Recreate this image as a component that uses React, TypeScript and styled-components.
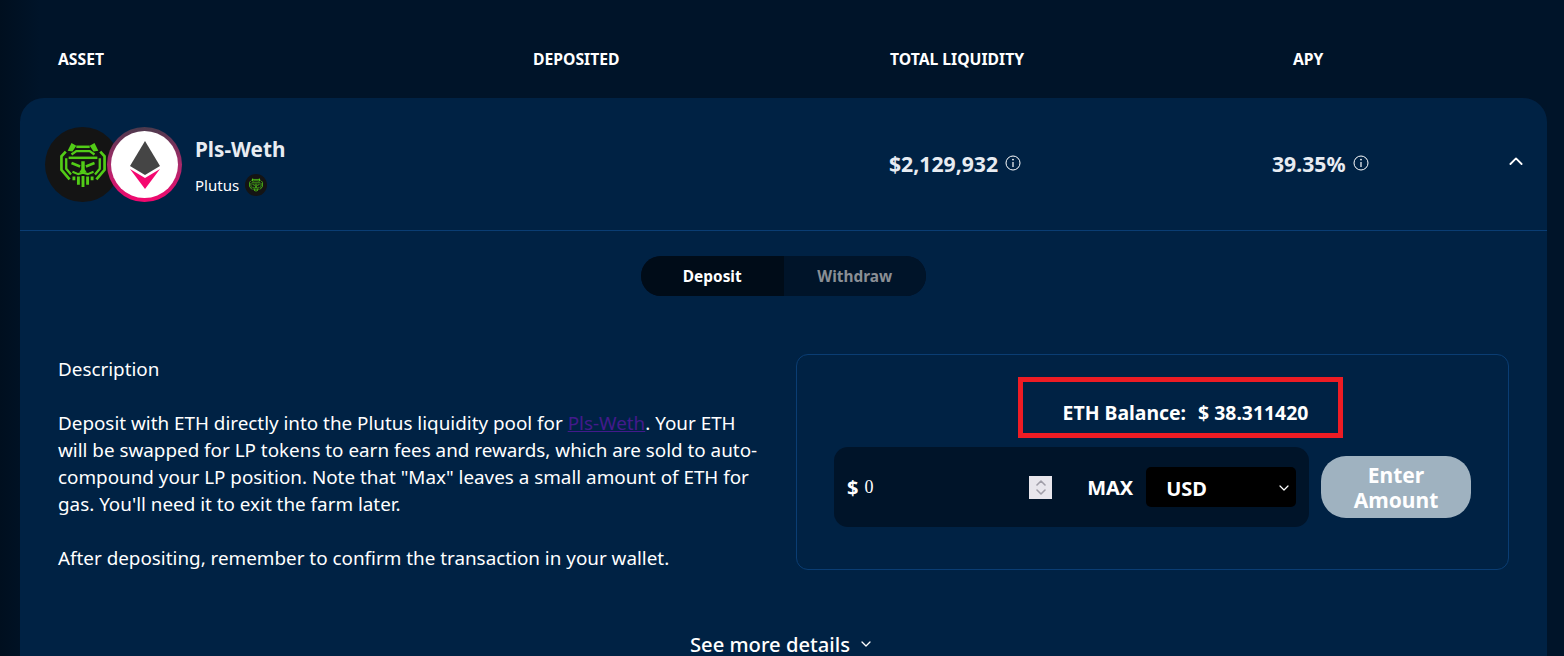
import React from "react";
import styled, { createGlobalStyle } from "styled-components";

const GlobalStyle = createGlobalStyle`
  html, body {
    margin: 0;
    padding: 0;
    height: 656px;
    overflow: hidden;
    background: #001429;
  }
  body {
    font-family: "Noto Sans", "Open Sans", sans-serif;
    color: #fff;
  }
`;

const Page = styled.div`
  width: 1564px;
  height: 656px;
  overflow: hidden;
  background: linear-gradient(to right, #000f1f 0, #001429 40px, #001429 100%);
`;

const TableHead = styled.div`
  display: grid;
  grid-template-columns: 475px 357px 403px 1fr;
  height: 98px;
  padding: 20px 0 0 58px;
  align-items: center;
  box-sizing: border-box;
`;

const HeadCell = styled.div`
  font-size: 15.7px;
  font-weight: 700;
  line-height: 20px;
`;

const Card = styled.section`
  margin: 0 17px 0 20px;
  background: #002244;
  border-radius: 24px 24px 0 0;
  height: 558px;
`;

const Row = styled.div`
  display: grid;
  grid-template-columns: 869px 383px 1fr auto;
  height: 132px;
  border-bottom: 1px solid #0a3d73;
  align-items: start;
`;

const AssetCell = styled.div`
  display: flex;
  align-items: center;
  padding: 29px 0 0 25px;
`;

const Avatars = styled.div`
  display: flex;
  width: 137px;
  flex: none;
`;

const Avatar = styled.div`
  width: 75px;
  height: 75px;
  border-radius: 50%;
  background: #141414;
  display: flex;
  align-items: center;
  justify-content: center;
  flex: none;
`;

const EthAvatar = styled.div`
  width: 75px;
  height: 75px;
  border-radius: 50%;
  margin-left: -13px;
  padding: 4px;
  box-sizing: border-box;
  background: linear-gradient(to bottom, #4a3a4c 0%, #a82a6a 50%, #f5076f 100%);
  flex: none;
`;

const EthInner = styled.div`
  width: 100%;
  height: 100%;
  border-radius: 50%;
  background: #fff;
  display: flex;
  align-items: center;
  justify-content: center;
`;

const AssetText = styled.div`
  display: flex;
  flex-direction: column;
  margin-left: 13px;
  padding-top: 2px;
`;

const AssetName = styled.div`
  font-size: 20.7px;
  font-weight: 700;
  line-height: 28px;
  color: #e8ecf2;
`;

const AssetSource = styled.div`
  display: flex;
  align-items: center;
  gap: 6px;
  font-size: 15px;
  line-height: 22px;
  margin-top: 11px;
`;

const MiniBadge = styled.div`
  width: 22px;
  height: 22px;
  border-radius: 50%;
  background: #141414;
  display: flex;
  align-items: center;
  justify-content: center;
`;

const StatCell = styled.div`
  display: flex;
  align-items: flex-start;
  gap: 7px;
  padding-top: 52px;
  font-size: 21.2px;
  font-weight: 700;
  line-height: 28px;
  color: #e8ecf2;
`;

const InfoWrap = styled.span`
  display: inline-flex;
  margin-top: 5px;
`;

const Collapse = styled.div`
  padding: 50px 24px 0 0;
`;

const TabsRow = styled.div`
  display: flex;
  justify-content: center;
  padding-top: 25px;
`;

const Tabs = styled.div`
  display: flex;
  width: 285px;
  height: 40px;
  border-radius: 20px;
  background: #001429;
  overflow: hidden;
`;

const Tab = styled.div<{ $active?: boolean }>`
  flex: 1;
  display: flex;
  align-items: center;
  justify-content: center;
  font-size: 15.4px;
  font-weight: 700;
  color: ${(p) => (p.$active ? "#fff" : "#8a8f95")};
  background: ${(p) => (p.$active ? "#000c18" : "#001429")};
`;

const Body = styled.div`
  display: grid;
  grid-template-columns: 706px 713px;
  column-gap: 32px;
  padding: 58px 0 0 38px;
`;

const Description = styled.div`
  font-size: 18.85px;
  line-height: 27px;
  color: #fff;
  padding-top: 2px;
`;

const Para = styled.p`
  margin: 0 0 27px;

  &:last-child {
    margin-bottom: 0;
  }
`;

const PoolLink = styled.a`
  color: #431a8c;
  text-decoration: underline;
`;

const Panel = styled.div`
  border: 1px solid #0a3d73;
  border-radius: 12px;
  height: 216px;
  box-sizing: border-box;
  padding: 44px 37px 0;
  position: relative;
`;

const Balance = styled.div`
  display: flex;
  justify-content: center;
  gap: 12px;
  font-size: 19.4px;
  font-weight: 700;
  line-height: 28px;
  padding-left: 66px;
`;

const Highlight = styled.div`
  position: absolute;
  left: 221px;
  top: 22px;
  width: 325px;
  height: 61px;
  border: 5px solid #ed1c24;
  box-sizing: border-box;
  pointer-events: none;
`;

const FormRow = styled.div`
  display: flex;
  align-items: center;
  gap: 12px;
  margin-top: 20px;
`;

const AmountBox = styled.div`
  display: flex;
  align-items: center;
  width: 475px;
  height: 80px;
  background: #001429;
  border-radius: 14px;
  padding: 0 13px;
  box-sizing: border-box;
`;

const Dollar = styled.span`
  font-size: 20px;
  font-weight: 700;
  margin-right: 6px;
`;

const AmountValue = styled.span`
  font-family: "Liberation Serif", serif;
  font-size: 18px;
  width: 165px;
`;

const Spinner = styled.div`
  width: 23px;
  height: 23px;
  background: #e8e6ec;
  display: flex;
  flex-direction: column;
  align-items: center;
  justify-content: center;
  gap: 3px;
  flex: none;
`;

const MaxLabel = styled.span`
  font-size: 20px;
  font-weight: 700;
  margin-left: 35px;
`;

const CurrencySelect = styled.div`
  width: 150px;
  height: 40px;
  background: #000;
  border-radius: 5px;
  margin-left: 13px;
  display: flex;
  align-items: center;
  justify-content: space-between;
  padding: 2px 7px 0 20px;
  box-sizing: border-box;
  font-size: 20px;
  font-weight: 700;
`;

const EnterButton = styled.button`
  width: 150px;
  height: 62px;
  border: 0;
  border-radius: 25px;
  background: #9fb2c0;
  color: #fff;
  font-family: inherit;
  font-size: 21px;
  font-weight: 700;
  line-height: 25px;
  padding: 2px 20px 0;
`;

const MoreDetails = styled.div`
  display: flex;
  justify-content: center;
  align-items: center;
  gap: 11px;
  margin-top: 60px;
  padding-right: 6px;
  font-size: 20.2px;
  font-weight: 500;
  line-height: 24px;
`;

const PlutusFace = ({ size }: { size: number }) => (
  <svg width={size} height={size} viewBox="0 0 48 48" fill="none" stroke="#52cc17" strokeWidth="2.5">
    <path d="M8 9l4-8 5 3-4 6zM40 9l-4-8-5 3 4 6z" fill="#52cc17" stroke="none" />
    <path d="M17 5h14" strokeWidth="2.600" />
    <path d="M12 13l5-3.500h14l5 3.500" />
    <path d="M9 16.500h30" strokeWidth="2.600" />
    <path d="M6 10l-4.500 5v14l8.500 10M42 10l4.500 5v14l-8.500 10" strokeWidth="2.800" />
    <path d="M6.500 17v11l5 6M41.500 17v11l-5 6" strokeWidth="2.400" />
    <path d="M12 22l9 3.500M36 22l-9 3.500" strokeWidth="2.800" />
    <path d="M22.200 20h3.600v8.500l2 3h-7.600l2-3z" fill="#52cc17" stroke="none" />
    <path d="M13 31l6 2.500 5-1.500 5 1.500 6-2.500" strokeWidth="2.200" />
    <path d="M14.500 36v4M19.200 36v8.500M24 35.500V47M28.800 36v8.500M33.500 36v4" strokeWidth="3" />
  </svg>
);

const EthMark = () => (
  <svg width="30" height="48" viewBox="0 0 30 48">
    <path d="M15 0L30 25 15 34 0 25z" fill="#454545" />
    <path d="M0 28L15 37 30 28 15 48z" fill="#f5076f" />
  </svg>
);

const InfoIcon = () => (
  <svg width="16" height="16" viewBox="0 0 16 16" fill="none" stroke="#fff">
    <circle cx="8" cy="8" r="7" strokeWidth="1" />
    <path d="M8 7v5" strokeWidth="1.2" />
    <circle cx="8" cy="4.6" r="0.9" fill="#fff" stroke="none" />
  </svg>
);

const Chevron = ({ up, size, color, width }: { up?: boolean; size: number; color: string; width: number }) => (
  <svg width={size} height={size * 0.6} viewBox="0 0 10 6" fill="none" stroke={color} strokeWidth={width} strokeLinecap="round" strokeLinejoin="round">
    <path d={up ? "M1 5l4-4 4 4" : "M1 1l4 4 4-4"} />
  </svg>
);

const App: React.FC = () => (
  <Page>
    <GlobalStyle />
    <TableHead>
      <HeadCell>ASSET</HeadCell>
      <HeadCell>DEPOSITED</HeadCell>
      <HeadCell>TOTAL LIQUIDITY</HeadCell>
      <HeadCell>APY</HeadCell>
    </TableHead>
    <Card>
      <Row>
        <AssetCell>
          <Avatars>
            <Avatar>
              <PlutusFace size={46} />
            </Avatar>
            <EthAvatar>
              <EthInner>
                <EthMark />
              </EthInner>
            </EthAvatar>
          </Avatars>
          <AssetText>
            <AssetName>Pls-Weth</AssetName>
            <AssetSource>
              Plutus
              <MiniBadge>
                <PlutusFace size={14} />
              </MiniBadge>
            </AssetSource>
          </AssetText>
        </AssetCell>
        <StatCell>
          $2,129,932
          <InfoWrap>
            <InfoIcon />
          </InfoWrap>
        </StatCell>
        <StatCell>
          39.35%
          <InfoWrap>
            <InfoIcon />
          </InfoWrap>
        </StatCell>
        <Collapse>
          <Chevron up size={14} color="#fff" width={1.3} />
        </Collapse>
      </Row>
      <TabsRow>
        <Tabs>
          <Tab $active>Deposit</Tab>
          <Tab>Withdraw</Tab>
        </Tabs>
      </TabsRow>
      <Body>
        <Description>
          <Para>Description</Para>
          <Para>
            Deposit with ETH directly into the Plutus liquidity pool for <PoolLink href="#">Pls-Weth</PoolLink>. Your ETH will be
            swapped for LP tokens to earn fees and rewards, which are sold to auto-compound your LP position. Note that "Max"
            leaves a small amount of ETH for gas. You'll need it to exit the farm later.
          </Para>
          <Para>After depositing, remember to confirm the transaction in your wallet.</Para>
        </Description>
        <Panel>
          <Highlight />
          <Balance>
            <span>ETH Balance:</span>
            <span>$ 38.311420</span>
          </Balance>
          <FormRow>
            <AmountBox>
              <Dollar>$</Dollar>
              <AmountValue>0</AmountValue>
              <Spinner>
                <Chevron up size={10} color="#a09ea8" width={1.6} />
                <Chevron size={10} color="#a09ea8" width={1.6} />
              </Spinner>
              <MaxLabel>MAX</MaxLabel>
              <CurrencySelect>
                USD
                <Chevron size={10} color="#fff" width={1.2} />
              </CurrencySelect>
            </AmountBox>
            <EnterButton>Enter Amount</EnterButton>
          </FormRow>
        </Panel>
      </Body>
      <MoreDetails>
        See more details
        <Chevron size={10} color="#fff" width={1.3} />
      </MoreDetails>
    </Card>
  </Page>
);

export default App;
